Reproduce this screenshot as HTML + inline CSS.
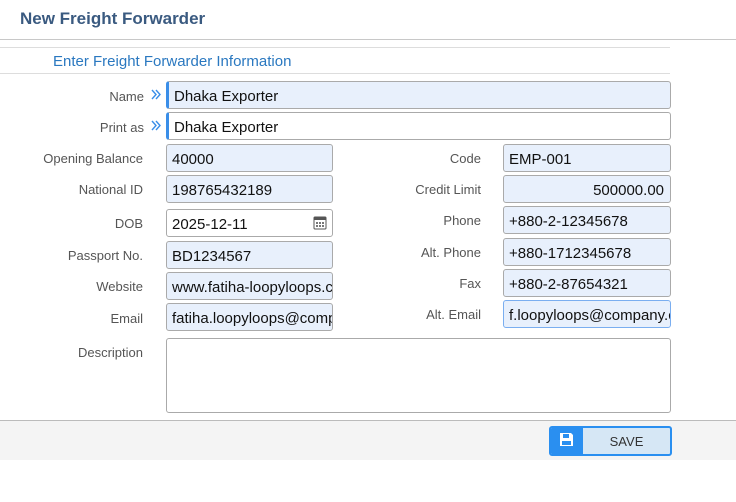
<!DOCTYPE html>
<html><head><style>
*{box-sizing:border-box;margin:0;padding:0}
body{width:736px;height:502px;background:#fff;font-family:"Liberation Sans",sans-serif;position:relative;overflow:hidden}
.a{position:absolute}
.lbl{position:absolute;font-size:13px;color:#555;text-align:right;width:140px}
.in{position:absolute;height:28px;border:1px solid #aaa;border-radius:3px;background:#e8f0fc;font-size:15px;color:#111;padding:2px 0 0 5px;line-height:25px;white-space:nowrap;overflow:hidden}
.ch{position:absolute}
</style></head><body>
<div class="a" style="left:0;top:0;width:736px;height:40px;border-bottom:1px solid #c8c8c8"></div>
<div class="a" style="left:20px;top:9px;font-size:17px;font-weight:bold;color:#3a5a80">New Freight Forwarder</div>
<div class="a" style="left:0;top:47px;width:670px;border-top:1px solid #ddd"></div>
<div class="a" style="left:53px;top:53px;font-size:15px;color:#2a78c0">Enter Freight Forwarder Information</div>
<div class="a" style="left:0;top:73px;width:670px;border-top:1px solid #ddd"></div>

<div class="lbl" style="left:4px;top:89px">Name</div>
<svg class="ch" style="left:151px;top:89px" width="11" height="11" viewBox="0 0 11 11"><path d="M1 1l4 4.5-4 4.5M5 1l4 4.5-4 4.5" fill="none" stroke="#3a8ee8" stroke-width="1.4"/></svg>
<div class="in" style="left:166px;top:81px;width:505px;border-left:3px solid #3a8ee8">Dhaka Exporter</div>
<div class="lbl" style="left:4px;top:120px">Print as</div>
<svg class="ch" style="left:151px;top:120px" width="11" height="11" viewBox="0 0 11 11"><path d="M1 1l4 4.5-4 4.5M5 1l4 4.5-4 4.5" fill="none" stroke="#3a8ee8" stroke-width="1.4"/></svg>
<div class="in" style="left:166px;top:112px;width:505px;border-left:3px solid #3a8ee8;background:#fff">Dhaka Exporter</div>

<div class="lbl" style="left:3px;top:151px">Opening Balance</div>
<div class="in" style="left:166px;top:144px;width:167px">40000</div>
<div class="lbl" style="left:3px;top:182px">National ID</div>
<div class="in" style="left:166px;top:175px;width:167px">198765432189</div>
<div class="lbl" style="left:3px;top:216px">DOB</div>
<div class="in" style="left:166px;top:209px;width:167px;background:#fff">2025-12-11
<svg style="position:absolute;right:5px;top:5px" width="14" height="15" viewBox="0 0 14 15"><rect x="1" y="2" width="12" height="12" rx="1" fill="none" stroke="#555"/><rect x="1" y="2" width="12" height="3" fill="#555"/><g fill="#777"><rect x="3" y="7" width="2" height="2"/><rect x="6" y="7" width="2" height="2"/><rect x="9" y="7" width="2" height="2"/><rect x="3" y="10" width="2" height="2"/><rect x="6" y="10" width="2" height="2"/><rect x="9" y="10" width="2" height="2"/></g></svg></div>
<div class="lbl" style="left:3px;top:248px">Passport No.</div>
<div class="in" style="left:166px;top:241px;width:167px">BD1234567</div>
<div class="lbl" style="left:3px;top:279px">Website</div>
<div class="in" style="left:166px;top:272px;width:167px">www.fatiha-loopyloops.com</div>
<div class="lbl" style="left:3px;top:311px">Email</div>
<div class="in" style="left:166px;top:303px;width:167px">fatiha.loopyloops@company.com</div>

<div class="lbl" style="left:341px;top:151px">Code</div>
<div class="in" style="left:503px;top:144px;width:168px">EMP-001</div>
<div class="lbl" style="left:341px;top:182px">Credit Limit</div>
<div class="in" style="left:503px;top:175px;width:168px;text-align:right;padding-right:6px">500000.00</div>
<div class="lbl" style="left:341px;top:213px">Phone</div>
<div class="in" style="left:503px;top:206px;width:168px">+880-2-12345678</div>
<div class="lbl" style="left:341px;top:245px">Alt. Phone</div>
<div class="in" style="left:503px;top:238px;width:168px">+880-1712345678</div>
<div class="lbl" style="left:341px;top:276px">Fax</div>
<div class="in" style="left:503px;top:269px;width:168px">+880-2-87654321</div>
<div class="lbl" style="left:341px;top:307px">Alt. Email</div>
<div class="in" style="left:503px;top:300px;width:168px;border-color:#7aaef0">f.loopyloops@company.com</div>

<div class="lbl" style="left:3px;top:345px">Description</div>
<div class="in" style="left:166px;top:338px;width:505px;height:75px;background:#fff"></div>

<div class="a" style="left:0;top:420px;width:736px;height:40px;background:#f4f4f4;border-top:1px solid #bbb"></div>
<div class="a" style="left:549px;top:426px;width:123px;height:30px;border:2px solid #2a8ff0;border-radius:3px;background:#d6e7f5;overflow:hidden">
<div class="a" style="left:0;top:0;width:32px;height:26px;background:#2a8ff0"></div>
<svg class="a" style="left:8px;top:4px" width="15" height="15" viewBox="0 0 15 15"><path d="M1 1h11l2 2v11H1z" fill="#fff"/><rect x="4" y="2" width="6" height="4" fill="#2a8ff0"/><rect x="3" y="9" width="9" height="4" fill="#2a8ff0"/></svg>
<div class="a" style="left:32px;top:6px;width:87px;text-align:center;font-size:13px;color:#333">SAVE</div>
</div>
</body></html>
